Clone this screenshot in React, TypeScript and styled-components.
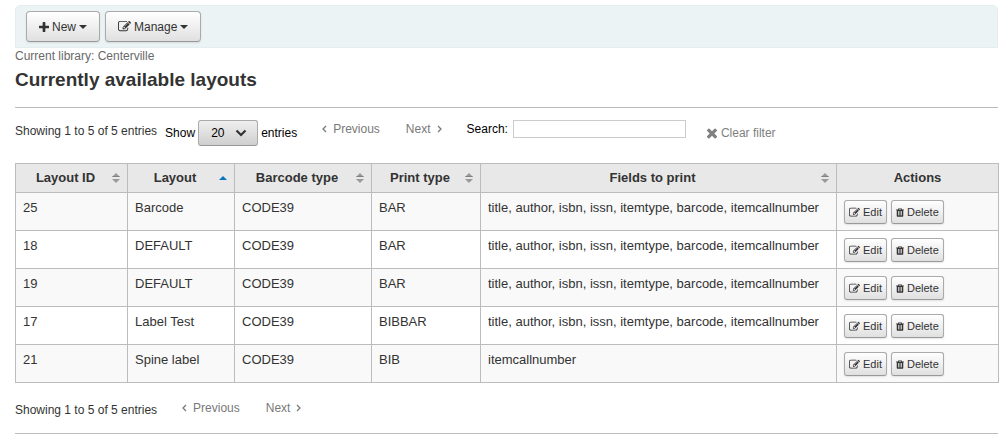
import React from "react";
import styled, { createGlobalStyle, css } from "styled-components";

const GlobalStyle = createGlobalStyle`
  *, *::before, *::after { box-sizing: border-box; }
  body {
    margin: 0;
    background: #fff;
    color: #333;
    font: 13px/18px "Liberation Sans", Arial, sans-serif;
  }
`;

const Page = styled.main`
  padding: 5px 10px 0 15px;
`;

const Toolbar = styled.div`
  display: flex;
  gap: 5px;
  padding: 5px 10px;
  background: #ebf3f5;
  border: 1px solid #e3eef1;
  border-radius: 5px 5px 0 0;
`;

const Button = styled.button<{ $small?: boolean }>`
  display: inline-flex;
  align-items: center;
  gap: 3px;
  height: ${(p) => (p.$small ? 24 : 31)}px;
  padding: ${(p) => (p.$small ? "0 4px" : "0 12px")};
  border: 1px solid #aaa;
  border-bottom-color: #999;
  border-radius: ${(p) => (p.$small ? 3 : 4)}px;
  background: linear-gradient(to bottom, #fff, #e0e0e0);
  box-shadow: 0 1px 2px rgba(0, 0, 0, 0.1);
  color: #333;
  font-family: inherit;
  font-size: ${(p) => (p.$small ? 11 : 12)}px;
  line-height: 18px;
  cursor: pointer;
`;

const Library = styled.div`
  color: #696969;
  font-size: 12px;
  line-height: 16px;
`;

const Title = styled.h1`
  margin: 4px 0 15px;
  font-size: 19px;
  line-height: 24px;
`;

const Rule = styled.hr`
  margin: 0;
  border: 0;
  border-top: 1px solid #bcbcbc;
`;

const Controls = styled.div`
  display: flex;
  align-items: flex-start;
  padding: 12px 0 17px;
  font-size: 12px;
  line-height: 18px;
`;

const Footer = styled(Controls)`
  padding: 16px 0 14px;
`;

const Info = styled.div`
  padding-top: 2px;
`;

const Length = styled.label`
  display: flex;
  align-items: center;
  gap: 3px;
  margin-left: 8px;
  color: #000;
`;

const SelectBox = styled.span`
  display: grid;
  align-items: center;
  width: 60px;

  > * { grid-area: 1 / 1; }
  > svg { justify-self: end; margin-right: 11px; pointer-events: none; }
`;

const Select = styled.select`
  appearance: none;
  height: 26px;
  padding: 0 12px;
  border: 1px solid #aaa;
  border-bottom-color: #999;
  border-radius: 3px;
  background: linear-gradient(to bottom, #efefef, #cfcfcf);
  color: #000;
  font: inherit;
`;

const Pager = styled.nav`
  display: flex;
  gap: 26px;
  margin-left: 25px;
`;

const PageLink = styled.button`
  display: flex;
  align-items: center;
  gap: 6px;
  padding: 0;
  border: 0;
  background: none;
  color: #797979;
  font: inherit;
`;

const Search = styled.label`
  display: flex;
  gap: 5px;
  margin-left: 25px;
  color: #000;
`;

const SearchInput = styled.input`
  width: 173px;
  height: 18px;
  padding: 0 3px;
  border: 1px solid #ccc;
  font: inherit;
`;

const Clear = styled.button`
  display: flex;
  align-items: center;
  gap: 3px;
  margin-left: 20px;
  padding: 4px 0 0;
  border: 0;
  background: none;
  color: #808080;
  font: inherit;
`;

const Table = styled.table`
  width: calc(100% + 1px);
  table-layout: fixed;
  border-collapse: collapse;
`;

const Col = styled.col<{ $width?: number }>`
  ${(p) => p.$width && css`width: ${p.$width}px;`}
`;

const Th = styled.th`
  height: 29px;
  padding: 0 7px;
  border: 1px solid #bcbcbc;
  background: #e8e8e8;
  line-height: 18px;
`;

const SortButton = styled.button`
  display: flex;
  align-items: center;
  gap: 4px;
  width: 100%;
  padding: 0;
  border: 0;
  background: none;
  color: inherit;
  font: inherit;
  cursor: pointer;

  > span { flex: 1; }
`;

const Row = styled.tr`
  background: #fff;
  &:nth-child(odd) { background: #f9f9f9; }
`;

const Td = styled.td`
  padding: 6px 6px 6px 7px;
  border: 1px solid #bcbcbc;
  vertical-align: top;
`;

const Actions = styled.div`
  display: flex;
  gap: 4px;
  padding-top: 1px;
`;

const icons = {
  plus: { box: "192 128 1408 1408", path: "M1600 736v192q0 40-28 68t-68 28h-416v416q0 40-28 68t-68 28h-192q-40 0-68-28t-28-68v-416h-416q-40 0-68-28t-28-68v-192q0-40 28-68t68-28h416v-416q0-40 28-68t68-28h192q40 0 68 28t28 68v416h416q40 0 68 28t28 68z" },
  edit: { box: "0 0 1792 1792", path: "M888 1184l116-116-152-152-116 116v56h96v96h56zm440-720q-16-16-33 1l-350 350q-17 17-1 33t33-1l350-350q17-17 1-33zm80 594v190q0 119-84.5 203.5t-203.5 84.5h-832q-119 0-203.5-84.5t-84.5-203.5v-832q0-119 84.5-203.5t203.5-84.5h832q63 0 117 25 15 7 18 23 3 17-9 29l-49 49q-14 14-32 8-23-6-45-6h-832q-66 0-113 47t-47 113v832q0 66 47 113t113 47h832q66 0 113-47t47-113v-126q0-13 9-22l64-64q15-15 35-7t20 29zm-96-738l288 288-672 672h-288v-288zm444 132l-92 92-288-288 92-92q28-28 68-28t68 28l152 152q28 28 28 68t-28 68z" },
  trash: { box: "192 128 1408 1536", path: "M704 1376v-704q0-14-9-23t-23-9h-64q-14 0-23 9t-9 23v704q0 14 9 23t23 9h64q14 0 23-9t9-23zm256 0v-704q0-14-9-23t-23-9h-64q-14 0-23 9t-9 23v704q0 14 9 23t23 9h64q14 0 23-9t9-23zm256 0v-704q0-14-9-23t-23-9h-64q-14 0-23 9t-9 23v704q0 14 9 23t23 9h64q14 0 23-9t9-23zm-544-992h448l-48-117q-7-9-17-11h-317q-10 2-17 11zm928 32v64q0 14-9 23t-23 9h-96v948q0 83-47 143.5t-113 60.5h-832q-66 0-113-58.5t-47-141.5v-952h-96q-14 0-23-9t-9-23v-64q0-14 9-23t23-9h309l70-167q15-37 54-63t79-26h320q40 0 79 26t54 63l70 167h309q14 0 23 9t9 23z" },
  times: { box: "192 192 1408 1408", path: "M1490 1322q0 40-28 68l-136 136q-28 28-68 28t-68-28l-294-294-294 294q-28 28-68 28t-68-28l-136-136q-28-28-28-68t28-68l294-294-294-294q-28-28-28-68t28-68l136-136q28-28 68-28t68 28l294 294 294-294q28-28 68-28t68 28l136 136q28 28 28 68t-28 68l-294 294 294 294q28 28 28 68z" },
};

type IconProps = { name: keyof typeof icons; width: number; height?: number };

const Icon = ({ name, width, height = width }: IconProps) => (
  <svg width={width} height={height} viewBox={icons[name].box} fill="currentColor" aria-hidden="true">
    <path d={icons[name].path} />
  </svg>
);

const Caret = () => (
  <svg width="8" height="4" viewBox="0 0 8 4" fill="currentColor" aria-hidden="true">
    <path d="M0 0h8L4 4z" />
  </svg>
);

const Chevron = ({ d }: { d: string }) => (
  <svg width="5" height="8" viewBox="0 0 5 8" fill="none" stroke="currentColor" strokeWidth="1.3" aria-hidden="true">
    <path d={d} />
  </svg>
);

const SortIcon = ({ active }: { active?: boolean }) => (
  <svg width="8" height="10" viewBox="0 0 8 10" aria-hidden="true">
    {active ? (
      <path d="M0 7L4 3l4 4z" fill="#0775bd" />
    ) : (
      <>
        <path d="M0 4L4 0l4 4zM0 6h8l-4 4z" fill="#9a9a9a" />
        <path d="M1 3h6l1 1H0z" fill="#808080" />
      </>
    )}
  </svg>
);

const Pagination = ({ label }: { label: string }) => (
  <Pager aria-label={label}>
    <PageLink type="button"><Chevron d="M4 1L1 4l3 3" />Previous</PageLink>
    <PageLink type="button">Next<Chevron d="M1 1l3 3-3 3" /></PageLink>
  </Pager>
);

const columns = [
  { title: "Layout ID", width: 112 },
  { title: "Layout", width: 107, active: true },
  { title: "Barcode type", width: 137 },
  { title: "Print type", width: 109 },
  { title: "Fields to print" },
];

const allFields = "title, author, isbn, issn, itemtype, barcode, itemcallnumber";
const layouts = [
  ["25", "Barcode", "CODE39", "BAR", allFields],
  ["18", "DEFAULT", "CODE39", "BAR", allFields],
  ["19", "DEFAULT", "CODE39", "BAR", allFields],
  ["17", "Label Test", "CODE39", "BIBBAR", allFields],
  ["21", "Spine label", "CODE39", "BIB", "itemcallnumber"],
];

export default function App() {
  return (
    <Page>
      <GlobalStyle />
      <Toolbar>
        <Button type="button"><Icon name="plus" width={10} />New <Caret /></Button>
        <Button type="button"><Icon name="edit" width={13} />Manage <Caret /></Button>
      </Toolbar>
      <Library>Current library: Centerville</Library>
      <Title>Currently available layouts</Title>
      <Rule />
      <Controls>
        <Info>Showing 1 to 5 of 5 entries</Info>
        <Length>
          Show
          <SelectBox>
            <Select defaultValue="20">
              <option>20</option>
              <option>50</option>
              <option>100</option>
            </Select>
            <svg width="12" height="8" viewBox="0 0 12 8" fill="none" stroke="#333" strokeWidth="2.2" aria-hidden="true">
              <path d="M1.500 1.500L6 6l4.500-4.500" />
            </svg>
          </SelectBox>
          entries
        </Length>
        <Pagination label="Pages above the table" />
        <Search>
          Search:
          <SearchInput type="text" />
        </Search>
        <Clear type="button"><Icon name="times" width={12} />Clear filter</Clear>
      </Controls>
      <Table>
        <colgroup>
          {columns.map((c) => <Col key={c.title} $width={c.width} />)}
          <Col $width={162} />
        </colgroup>
        <thead>
          <tr>
            {columns.map((c) => (
              <Th key={c.title} scope="col" aria-sort={c.active ? "ascending" : undefined}>
                <SortButton type="button"><span>{c.title}</span><SortIcon active={c.active} /></SortButton>
              </Th>
            ))}
            <Th scope="col">Actions</Th>
          </tr>
        </thead>
        <tbody>
          {layouts.map((cells) => (
            <Row key={cells[0]}>
              {cells.map((cell, i) => <Td key={i}>{cell}</Td>)}
              <Td>
                <Actions>
                  <Button type="button" $small><Icon name="edit" width={11} />Edit</Button>
                  <Button type="button" $small><Icon name="trash" width={8} height={9} />Delete</Button>
                </Actions>
              </Td>
            </Row>
          ))}
        </tbody>
      </Table>
      <Footer>
        <Info>Showing 1 to 5 of 5 entries</Info>
        <Pagination label="Pages below the table" />
      </Footer>
      <Rule />
    </Page>
  );
}
